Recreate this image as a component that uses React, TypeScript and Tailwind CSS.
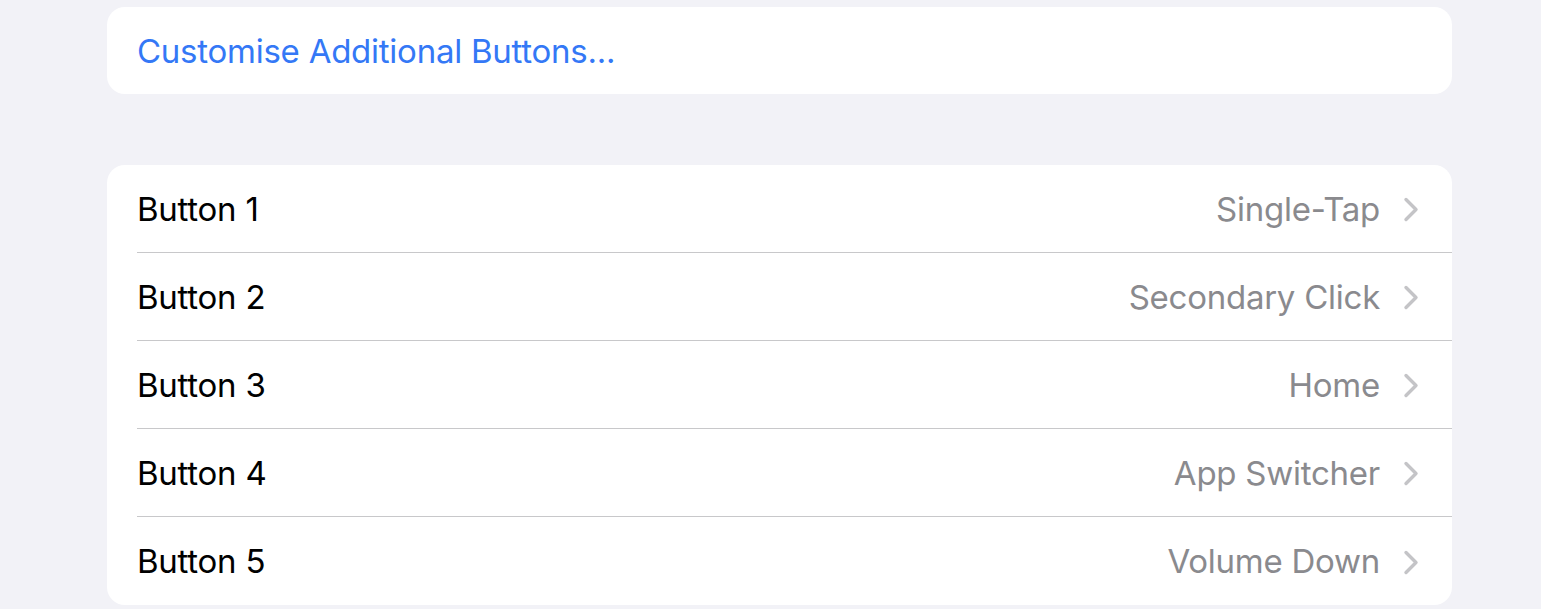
const rows = [
  { label: "Button 1", value: "Single-Tap" },
  { label: "Button 2", value: "Secondary Click" },
  { label: "Button 3", value: "Home" },
  { label: "Button 4", value: "App Switcher" },
  { label: "Button 5", value: "Volume Down" },
];

function Chevron() {
  return (
    <svg width="16" height="25" viewBox="0 0 16 25" fill="none" className="shrink-0">
      <path
        d="M3 2.5 L13 12.5 L3 22.5"
        stroke="#c4c4c7"
        strokeWidth="3.4"
        strokeLinecap="round"
        strokeLinejoin="round"
      />
    </svg>
  );
}

export default function App() {
  return (
    <div
      className="h-[609px] w-full overflow-hidden bg-[#f2f2f7] px-[107px] pt-[7px] text-[33px] tracking-[-0.25px]"
      style={{ fontFamily: "Inter, 'Noto Sans', sans-serif" }}
    >
      <div className="flex h-[87px] w-[1345px] items-center rounded-[18px] bg-white pl-[30px] pt-[2px]">
        <span className="text-[#3478f6]">Customise Additional Buttons...</span>
      </div>

      <div className="mt-[71px] w-[1345px] rounded-[18px] bg-white">
        {rows.map((row, i) => (
          <div key={row.label} className="pl-[30px]">
            <div
              className={
                "flex h-[88px] items-center justify-between pr-[33px] pt-[2px] " +
                (i < rows.length - 1 ? "border-b border-[#c8c8ca]" : "")
              }
            >
              <span className="text-black">{row.label}</span>
              <div className="flex items-center gap-[23px]">
                <span className="text-[#8a8a8e]">{row.value}</span>
                <Chevron />
              </div>
            </div>
          </div>
        ))}
      </div>
    </div>
  );
}
